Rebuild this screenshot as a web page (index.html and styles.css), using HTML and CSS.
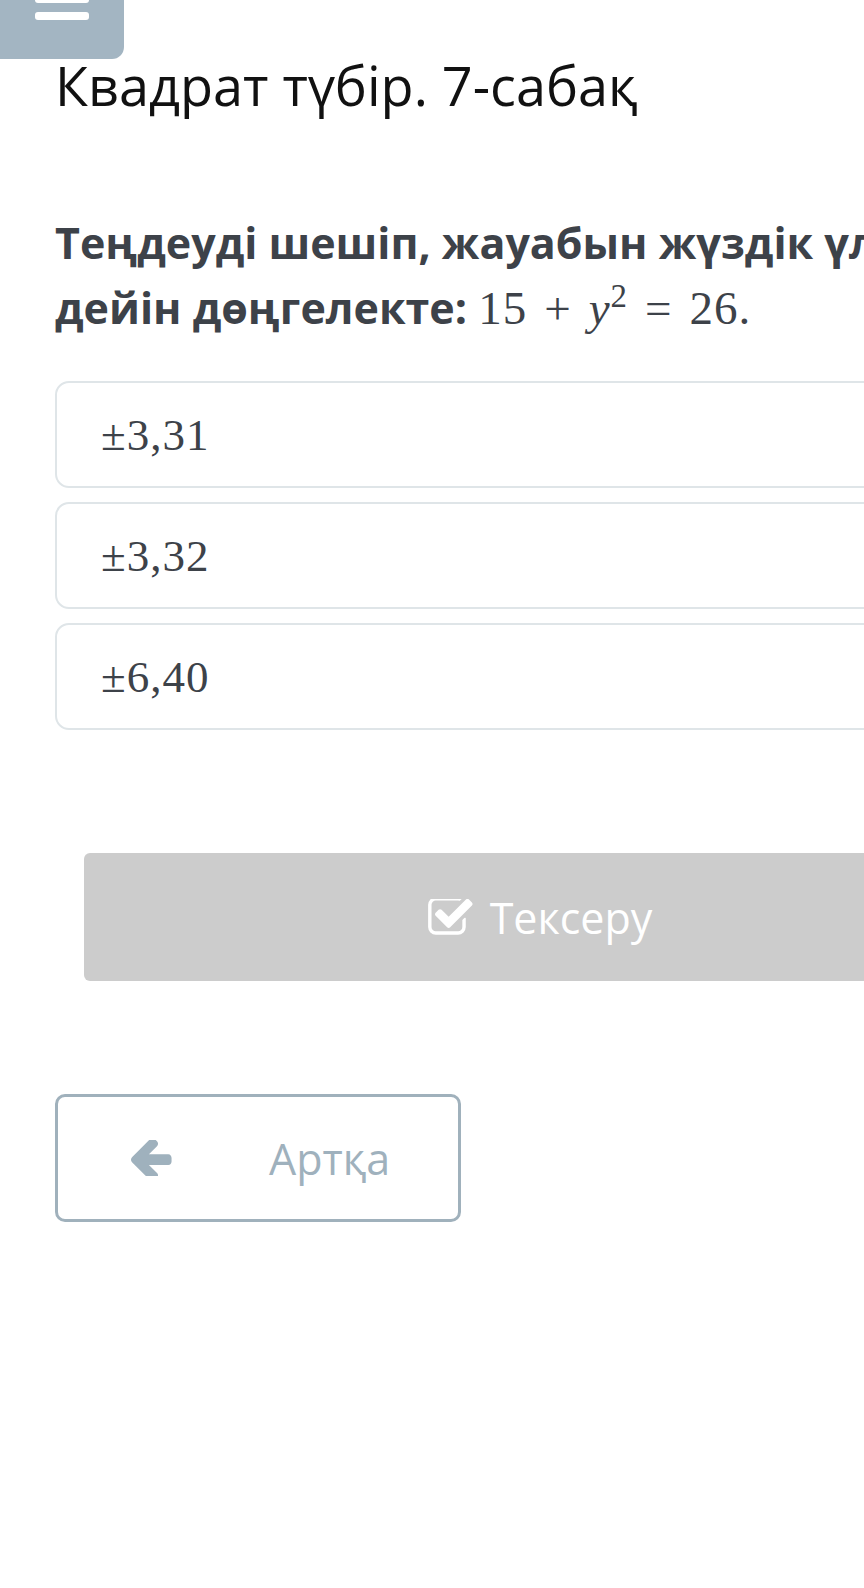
FILE: index.html
```html
<!DOCTYPE html>
<html lang="kk">
<head>
  <meta charset="UTF-8">
  <meta name="viewport" content="width=device-width, initial-scale=1.0">
  <title>Квадрат түбір. 7-сабақ</title>
  <link rel="stylesheet" href="styles.css">
</head>
<body>
  <div class="page">
    <div class="menu-btn">
      <svg width="57" height="59" viewBox="0 0 57 59">
        <rect x="0" y="-5" width="54" height="8" rx="3" fill="#fff"/>
        <rect x="0" y="12" width="54" height="8" rx="3" fill="#fff"/>
      </svg>
    </div>

    <h1 class="lesson-title">Квадрат түбір. 7-сабақ</h1>

    <p class="question">
      Теңдеуді шешіп, жауабын жүздік үлестерге<br>
      дейін дөңгелекте: <span class="math">15<span class="op">+</span><i>y</i><sup>2</sup><span class="op">=</span>26.</span>
    </p>

    <div class="answers">
      <div class="answer"><span class="math">±3,31</span></div>
      <div class="answer"><span class="math">±3,32</span></div>
      <div class="answer"><span class="math">±6,40</span></div>
    </div>

    <div class="check-btn">
      <svg class="check-icon" viewBox="60 200 1720 1380" width="46" height="37">
        <path fill="#fff" d="M1472 930v318q0 119-84.5 203.5t-203.5 84.5h-832q-119 0-203.5-84.5t-84.5-203.5v-832q0-119 84.5-203.5t203.5-84.5h832q63 0 117 25 15 7 18 23 3 17-9 29l-49 49q-10 10-23 10-3 0-9-2-23-6-45-6h-832q-66 0-113 47t-47 113v832q0 66 47 113t113 47h832q66 0 113-47t47-113v-254q0-13 9-22l64-64q10-10 23-10 6 0 12 3 20 8 20 29zm231-489l-814 814q-24 24-57 24t-57-24l-430-430q-24-24-24-57t24-57l110-110q24-24 57-24t57 24l263 263 647-647q24-24 57-24t57 24l110 110q24 24 24 57t-24 57z"/>
      </svg>
      <span>Тексеру</span>
    </div>

    <div class="back-btn">
      <svg class="back-icon" viewBox="120 250 1560 1300" width="43" height="36">
        <path fill="#9fb1bd" d="M1664 896v128q0 53-32.5 90.5t-84.5 37.5h-704l293 294q38 36 38 90t-38 90l-75 76q-37 37-90 37-52 0-91-37l-651-652q-37-37-37-90 0-52 37-91l651-650q38-38 91-38 52 0 90 38l75 74q38 38 38 91t-38 91l-293 293h704q52 0 84.5 37.5t32.5 90.5z"/>
      </svg>
      <span>Артқа</span>
    </div>
  </div>
</body>
</html>
```

FILE: styles.css
```css
body {
  margin: 0;
  padding: 0;
  background: #fff;
  overflow: hidden;
  font-family: "Open Sans", "Noto Sans", sans-serif;
}
.page {
  width: 1080px;
  padding: 0 55px;
  box-sizing: border-box;
}
.menu-btn {
  margin-left: -55px;
  width: 124px;
  height: 59px;
  background: #a3b5c2;
  border-bottom-right-radius: 12px;
  display: flex;
  padding-left: 35px;
  box-sizing: border-box;
}
.lesson-title {
  margin: 1px 0 0 0;
  font-size: 54px;
  line-height: 50px;
  font-weight: 400;
  color: #111;
}
.question {
  margin: 100px 0 0 0;
  font-size: 43px;
  line-height: 65px;
  font-weight: 700;
  color: #3d4249;
  white-space: nowrap;
}
.math {
  font-family: "Liberation Serif", serif;
  font-weight: 400;
}
.math i {
  font-style: italic;
}
.math sup {
  font-size: 0.7em;
  line-height: 0;
}
.question .math {
  font-size: 47px;
  letter-spacing: 1px;
}
.question .op {
  margin: 0 17px;
}
.answers {
  margin-top: 40px;
  display: flex;
  flex-direction: column;
  gap: 14px;
}
.answer {
  height: 107px;
  box-sizing: border-box;
  border: 2px solid #dfe5e8;
  border-radius: 14px;
  display: flex;
  align-items: center;
  padding-left: 44px;
  color: #3d4249;
  font-size: 45px;
  letter-spacing: 1px;
}
.check-btn {
  margin: 123px 29px 0 29px;
  height: 128px;
  background: #cccccc;
  border-radius: 6px;
  display: flex;
  align-items: center;
  justify-content: center;
  gap: 16px;
  color: #fff;
  font-size: 43px;
}
.back-btn {
  margin-top: 113px;
  width: 406px;
  height: 128px;
  box-sizing: border-box;
  border: 3px solid #a0b1bc;
  border-radius: 10px;
  display: flex;
  align-items: center;
  padding-left: 71px;
  color: #9fb1bd;
  font-size: 43px;
}
.back-btn span {
  margin-left: 97px;
}
```
